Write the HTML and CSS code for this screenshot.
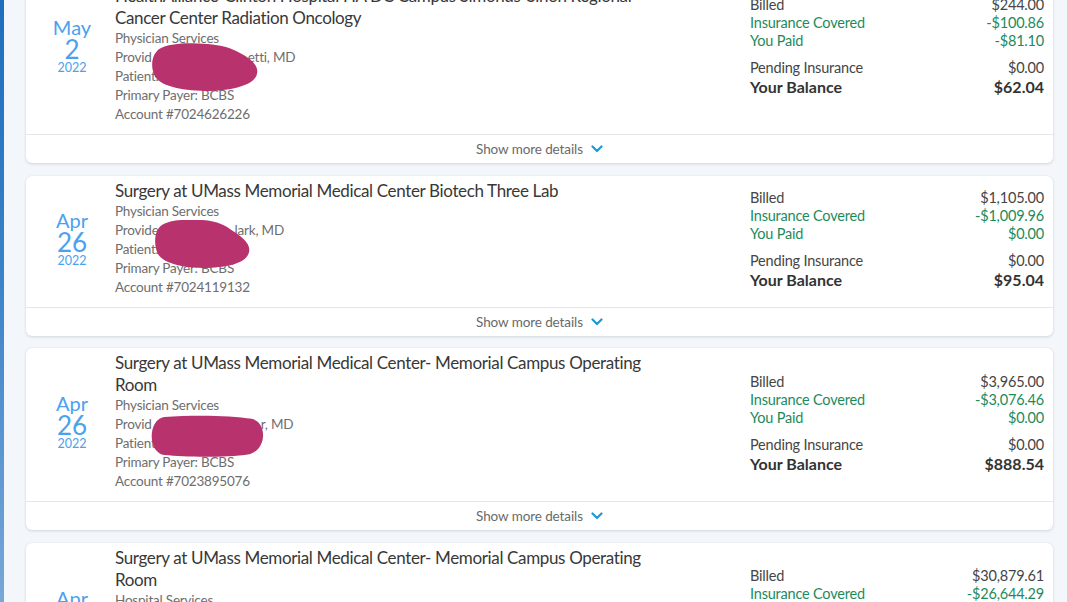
FILE: index.html
```html
<!DOCTYPE html>
<html lang="en">
<head>
<meta charset="utf-8">
<title>Billing statements</title>
<link rel="stylesheet" href="styles.css">
</head>
<body>
<div class="page">
  <div class="side-bar"></div>
  <main class="list">

    <section class="card card--scrolled">
      <div class="card-body">
        <div class="date">
          <div class="date-month">May</div>
          <div class="date-day">2</div>
          <div class="date-year">2022</div>
        </div>
        <div class="details">
          <h2 class="title">HealthAlliance-Clinton Hospital HA DC Campus Simonds-Sinon Regional Cancer Center Radiation Oncology</h2>
          <div class="line">Physician Services</div>
          <div class="line line--redacted">Provid<span class="gap gap-a"></span>etti, MD
            <svg class="blob blob-a" viewBox="0 0 100 48" preserveAspectRatio="none"><path d="M4 9 C 9 1, 30 -1, 52 1 C 66 2, 75 5, 83 10 C 94 16, 101 23, 99 31 C 97 41, 80 47, 55 48 C 30 48, 10 44, 3 34 C -1 26, -1 15, 4 9 Z"/></svg>
          </div>
          <div class="line">Patient:</div>
          <div class="line">Primary Payer: BCBS</div>
          <div class="line">Account #7024626226</div>
        </div>
        <div class="amounts">
          <div class="row"><span>Billed</span><span>$244.00</span></div>
          <div class="row row--green"><span>Insurance Covered</span><span>-$100.86</span></div>
          <div class="row row--green"><span>You Paid</span><span>-$81.10</span></div>
          <div class="row row--sep"><span>Pending Insurance</span><span>$0.00</span></div>
          <div class="row row--total"><span>Your Balance</span><span>$62.04</span></div>
        </div>
      </div>
      <button class="more">Show more details <svg class="chev" viewBox="0 0 12 8"><path d="M1.5 1.5 L6 6 L10.5 1.5"/></svg></button>
    </section>

    <section class="card">
      <div class="card-body">
        <div class="date">
          <div class="date-month">Apr</div>
          <div class="date-day">26</div>
          <div class="date-year">2022</div>
        </div>
        <div class="details">
          <h2 class="title">Surgery at UMass Memorial Medical Center Biotech Three Lab</h2>
          <div class="line">Physician Services</div>
          <div class="line line--redacted">Provide<span class="gap gap-b"></span>lark, MD
            <svg class="blob blob-b" viewBox="0 0 100 48" preserveAspectRatio="none"><path d="M4 8 C 10 0, 30 -1, 50 0 C 66 1, 75 6, 82 11 C 92 17, 101 24, 99 32 C 97 42, 80 47, 55 48 C 30 48, 10 44, 3 34 C -1 26, -1 14, 4 8 Z"/></svg>
          </div>
          <div class="line">Patient:</div>
          <div class="line">Primary Payer: BCBS</div>
          <div class="line">Account #7024119132</div>
        </div>
        <div class="amounts">
          <div class="row"><span>Billed</span><span>$1,105.00</span></div>
          <div class="row row--green"><span>Insurance Covered</span><span>-$1,009.96</span></div>
          <div class="row row--green"><span>You Paid</span><span>$0.00</span></div>
          <div class="row row--sep"><span>Pending Insurance</span><span>$0.00</span></div>
          <div class="row row--total"><span>Your Balance</span><span>$95.04</span></div>
        </div>
      </div>
      <button class="more">Show more details <svg class="chev" viewBox="0 0 12 8"><path d="M1.5 1.5 L6 6 L10.5 1.5"/></svg></button>
    </section>

    <section class="card">
      <div class="card-body">
        <div class="date">
          <div class="date-month">Apr</div>
          <div class="date-day">26</div>
          <div class="date-year">2022</div>
        </div>
        <div class="details">
          <h2 class="title">Surgery at UMass Memorial Medical Center- Memorial Campus Operating Room</h2>
          <div class="line">Physician Services</div>
          <div class="line line--redacted">Provid<span class="gap gap-c"></span>r, MD
            <svg class="blob blob-c" viewBox="0 0 100 44" preserveAspectRatio="none"><path d="M14 2 C 36 0, 70 0, 88 4 C 101 8, 101 36, 86 41 C 64 45, 32 44, 14 42 C 0 40, -1 5, 14 2 Z"/></svg>
          </div>
          <div class="line">Patient:</div>
          <div class="line">Primary Payer: BCBS</div>
          <div class="line">Account #7023895076</div>
        </div>
        <div class="amounts">
          <div class="row"><span>Billed</span><span>$3,965.00</span></div>
          <div class="row row--green"><span>Insurance Covered</span><span>-$3,076.46</span></div>
          <div class="row row--green"><span>You Paid</span><span>$0.00</span></div>
          <div class="row row--sep"><span>Pending Insurance</span><span>$0.00</span></div>
          <div class="row row--total"><span>Your Balance</span><span>$888.54</span></div>
        </div>
      </div>
      <button class="more">Show more details <svg class="chev" viewBox="0 0 12 8"><path d="M1.5 1.5 L6 6 L10.5 1.5"/></svg></button>
    </section>

    <section class="card">
      <div class="card-body">
        <div class="date">
          <div class="date-month">Apr</div>
          <div class="date-day">26</div>
          <div class="date-year">2022</div>
        </div>
        <div class="details">
          <h2 class="title">Surgery at UMass Memorial Medical Center- Memorial Campus Operating Room</h2>
          <div class="line">Hospital Services</div>
          <div class="line">Provider:</div>
          <div class="line">Patient:</div>
          <div class="line">Primary Payer: BCBS</div>
          <div class="line">Account #</div>
        </div>
        <div class="amounts">
          <div class="row"><span>Billed</span><span>$30,879.61</span></div>
          <div class="row row--green"><span>Insurance Covered</span><span>-$26,644.29</span></div>
          <div class="row row--green"><span>You Paid</span><span>$0.00</span></div>
          <div class="row row--sep"><span>Pending Insurance</span><span>$0.00</span></div>
          <div class="row row--total"><span>Your Balance</span><span>$4,235.32</span></div>
        </div>
      </div>
      <button class="more">Show more details <svg class="chev" viewBox="0 0 12 8"><path d="M1.5 1.5 L6 6 L10.5 1.5"/></svg></button>
    </section>

  </main>
</div>
</body>
</html>
```

FILE: styles.css
```css
* { box-sizing: border-box; }

html, body {
  margin: 0;
  padding: 0;
  height: 100%;
  overflow: hidden;
}

body {
  background: #f3f6fa;
  font-family: "Lato", "Liberation Sans", sans-serif;
  color: #3a3a3a;
}

.page {
  display: flex;
  height: 602px;
  overflow: hidden;
}

.side-bar {
  flex: 0 0 4px;
  background: linear-gradient(to bottom, #1f6dbd 0%, #3a82c8 45%, #78a7d9 100%);
}

.list {
  flex: 1;
  display: flex;
  flex-direction: column;
  gap: 12.5px;
  padding: 0 14px 0 22px;
  margin-top: -38px;
}

.card {
  background: #ffffff;
  border-radius: 6px;
  box-shadow: 0 1px 3px rgba(40, 60, 90, 0.16), 0 0 1px rgba(40, 60, 90, 0.10);
  flex: 0 0 auto;
}

.card-body {
  display: flex;
  align-items: center;
}

.date {
  flex: 0 0 89px;
  padding: 0 0 6px 3px;
  text-align: center;
  color: #4aa2ee;
}

.date-month {
  font-size: 20px;
  line-height: 22px;
}

.date-day {
  font-size: 26px;
  line-height: 23px;
}

.date-year {
  font-size: 12.5px;
  line-height: 14px;
}

.details {
  flex: 0 0 548px;
  align-self: stretch;
  padding: 4px 0 10px 0;
}

.card--scrolled .details {
  padding-top: 23px;
}

.title {
  margin: 0;
  font-size: 17px;
  letter-spacing: -0.35px;
  line-height: 22px;
  font-weight: 400;
  color: #383838;
}

.line {
  font-size: 13.5px;
  letter-spacing: -0.2px;
  line-height: 19px;
  color: #6e6e6e;
  white-space: nowrap;
}

.line--redacted {
  position: relative;
}

.gap {
  display: inline-block;
}

.gap-a { width: 96px; }
.gap-b { width: 76px; }
.gap-c { width: 109px; }

.blob {
  position: absolute;
  fill: #b8336d;
}

.blob-a { left: 37px; top: -5px; width: 106px; height: 48px; }
.blob-b { left: 40px; top: -1px; width: 95px; height: 48px; }
.blob-c { left: 33px; top: 0; width: 118px; height: 42px; }

.amounts {
  flex: 0 0 294px;
  margin-left: 87px;
  padding-bottom: 4px;
  font-size: 14.5px;
  letter-spacing: -0.2px;
  color: #454545;
}

.row {
  display: flex;
  justify-content: space-between;
  line-height: 18px;
}

.row--green {
  color: #1d8a5c;
}

.row--sep {
  margin-top: 9px;
}

.row--total {
  font-weight: 700;
  font-size: 16px;
  letter-spacing: 0;
  line-height: 19px;
  color: #333333;
}

.more {
  display: flex;
  width: 100%;
  align-items: center;
  justify-content: center;
  gap: 8px;
  height: 29px;
  border: 0;
  border-top: 1px solid #e4e6e9;
  background: transparent;
  font-family: inherit;
  font-size: 13.5px;
  letter-spacing: -0.1px;
  color: #6a6a6a;
  padding: 0;
  margin: 0;
  cursor: pointer;
}

.chev {
  width: 12px;
  height: 8px;
  fill: none;
  stroke: #1b9ad8;
  stroke-width: 2.2;
  stroke-linecap: round;
  stroke-linejoin: round;
}
```
